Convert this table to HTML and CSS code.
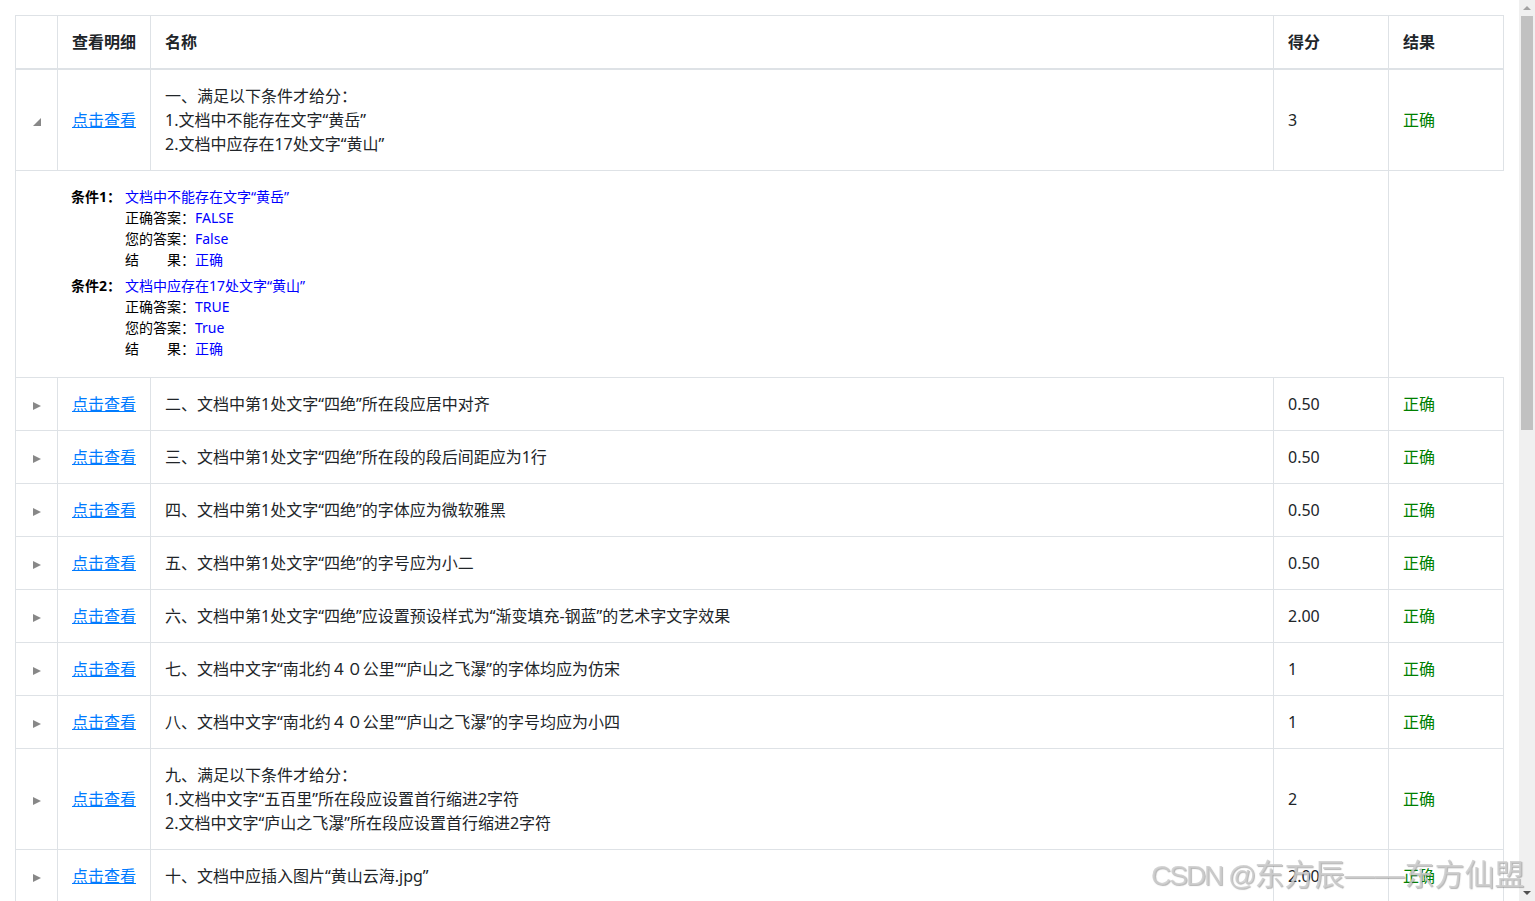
FILE: index.html
```html
<!DOCTYPE html>
<html lang="zh-CN">
<head>
<meta charset="utf-8">
<title>评分明细</title>
<link rel="stylesheet" href="styles.css">
</head>
<body>
<div class="page">
<table class="grid">
  <colgroup>
    <col class="c-arrow"><col class="c-view"><col class="c-name"><col class="c-score"><col class="c-result">
  </colgroup>
  <thead>
    <tr><th></th><th>查看明细</th><th>名称</th><th>得分</th><th>结果</th></tr>
  </thead>
  <tbody>
    <tr>
      <td class="arrow"><svg width="10" height="10" viewBox="0 0 10 10"><polygon points="9,1 9,9 1,9" fill="#888"/></svg></td>
      <td><a href="#">点击查看</a></td>
      <td>一、满足以下条件才给分：<br>1.文档中不能存在文字“黄岳”<br>2.文档中应存在17处文字“黄山”</td>
      <td>3</td>
      <td class="ok">正确</td>
    </tr>
    <tr class="detail">
      <td colspan="4">
        <div class="cond">
          <div class="line"><span class="clabel">条件1：</span><span class="val">文档中不能存在文字“黄岳”</span></div>
          <div class="line sub"><span class="flabel">正确答案：</span><span class="val">FALSE</span></div>
          <div class="line sub"><span class="flabel">您的答案：</span><span class="val">False</span></div>
          <div class="line sub"><span class="flabel spaced"><span>结</span><span>果：</span></span><span class="val">正确</span></div>
        </div>
        <div class="cond">
          <div class="line"><span class="clabel">条件2：</span><span class="val">文档中应存在17处文字“黄山”</span></div>
          <div class="line sub"><span class="flabel">正确答案：</span><span class="val">TRUE</span></div>
          <div class="line sub"><span class="flabel">您的答案：</span><span class="val">True</span></div>
          <div class="line sub"><span class="flabel spaced"><span>结</span><span>果：</span></span><span class="val">正确</span></div>
        </div>
      </td>
    </tr>
    <tr>
      <td class="arrow"><svg width="10" height="10" viewBox="0 0 10 10"><polygon points="1,1 9,5 1,9" fill="#888"/></svg></td>
      <td><a href="#">点击查看</a></td>
      <td>二、文档中第1处文字“四绝”所在段应居中对齐</td>
      <td>0.50</td>
      <td class="ok">正确</td>
    </tr>
    <tr>
      <td class="arrow"><svg width="10" height="10" viewBox="0 0 10 10"><polygon points="1,1 9,5 1,9" fill="#888"/></svg></td>
      <td><a href="#">点击查看</a></td>
      <td>三、文档中第1处文字“四绝”所在段的段后间距应为1行</td>
      <td>0.50</td>
      <td class="ok">正确</td>
    </tr>
    <tr>
      <td class="arrow"><svg width="10" height="10" viewBox="0 0 10 10"><polygon points="1,1 9,5 1,9" fill="#888"/></svg></td>
      <td><a href="#">点击查看</a></td>
      <td>四、文档中第1处文字“四绝”的字体应为微软雅黑</td>
      <td>0.50</td>
      <td class="ok">正确</td>
    </tr>
    <tr>
      <td class="arrow"><svg width="10" height="10" viewBox="0 0 10 10"><polygon points="1,1 9,5 1,9" fill="#888"/></svg></td>
      <td><a href="#">点击查看</a></td>
      <td>五、文档中第1处文字“四绝”的字号应为小二</td>
      <td>0.50</td>
      <td class="ok">正确</td>
    </tr>
    <tr>
      <td class="arrow"><svg width="10" height="10" viewBox="0 0 10 10"><polygon points="1,1 9,5 1,9" fill="#888"/></svg></td>
      <td><a href="#">点击查看</a></td>
      <td>六、文档中第1处文字“四绝”应设置预设样式为“渐变填充-钢蓝”的艺术字文字效果</td>
      <td>2.00</td>
      <td class="ok">正确</td>
    </tr>
    <tr>
      <td class="arrow"><svg width="10" height="10" viewBox="0 0 10 10"><polygon points="1,1 9,5 1,9" fill="#888"/></svg></td>
      <td><a href="#">点击查看</a></td>
      <td>七、文档中文字“南北约４０公里”“庐山之飞瀑”的字体均应为仿宋</td>
      <td>1</td>
      <td class="ok">正确</td>
    </tr>
    <tr>
      <td class="arrow"><svg width="10" height="10" viewBox="0 0 10 10"><polygon points="1,1 9,5 1,9" fill="#888"/></svg></td>
      <td><a href="#">点击查看</a></td>
      <td>八、文档中文字“南北约４０公里”“庐山之飞瀑”的字号均应为小四</td>
      <td>1</td>
      <td class="ok">正确</td>
    </tr>
    <tr>
      <td class="arrow"><svg width="10" height="10" viewBox="0 0 10 10"><polygon points="1,1 9,5 1,9" fill="#888"/></svg></td>
      <td><a href="#">点击查看</a></td>
      <td>九、满足以下条件才给分：<br>1.文档中文字“五百里”所在段应设置首行缩进2字符<br>2.文档中文字“庐山之飞瀑”所在段应设置首行缩进2字符</td>
      <td>2</td>
      <td class="ok">正确</td>
    </tr>
    <tr>
      <td class="arrow"><svg width="10" height="10" viewBox="0 0 10 10"><polygon points="1,1 9,5 1,9" fill="#888"/></svg></td>
      <td><a href="#">点击查看</a></td>
      <td>十、文档中应插入图片“黄山云海.jpg”</td>
      <td>2.00</td>
      <td class="ok">正确</td>
    </tr>
  </tbody>
</table>
</div>
<div class="scrollbar">
  <div class="sb-up"></div>
  <div class="sb-thumb"></div>
  <div class="sb-down"></div>
</div>
<div class="watermark"><span class="wm-latin">CSDN @</span>东方辰——东方仙盟</div>
</body>
</html>
```

FILE: styles.css
```css
html, body {
  margin: 0;
  padding: 0;
  overflow: hidden;
  height: 100%;
  background: #fff;
}
body {
  font-family: "Noto Sans", "Noto Sans CJK SC", sans-serif;
  font-size: 16px;
  color: #212529;
}
.page {
  padding: 15px 0 0 15px;
}
.grid {
  border-collapse: collapse;
  table-layout: fixed;
  width: 1489px;
}
.c-arrow { width: 42px; }
.c-view { width: 93px; }
.c-name { width: 1123px; }
.c-score { width: 115px; }
.c-result { width: 115px; }
.grid th,
.grid td {
  border: 1px solid #dee2e6;
  padding: 14px 14px;
  line-height: 24px;
  text-align: left;
  vertical-align: middle;
  white-space: nowrap;
}
.grid th {
  font-weight: bold;
  border-bottom: 2px solid #dee2e6;
  padding-top: 14px;
  padding-bottom: 14px;
}
.grid td.arrow {
  text-align: center;
  padding: 0;
}
.arrow svg {
  display: inline-block;
  vertical-align: middle;
}
.grid a {
  color: #007bff;
  text-decoration: underline;
}
.ok {
  color: #008000;
}
.detail td {
  padding: 15px 14px 18px 55px;
  font-size: 14px;
  line-height: 21px;
}
.cond + .cond {
  margin-top: 5px;
}
.line {
  display: flex;
}
.clabel {
  width: 54px;
  color: #000;
  font-weight: bold;
}
.sub {
  padding-left: 54px;
}
.flabel {
  width: 70px;
  color: #000;
}
.flabel.spaced {
  display: flex;
  justify-content: space-between;
  width: 70px;
}
.val {
  color: #0000ff;
}
.scrollbar {
  position: fixed;
  top: 0;
  right: 0;
  width: 16px;
  height: 901px;
  background: #f0f0f0;
}
.sb-thumb {
  position: absolute;
  left: 2px;
  top: 16px;
  width: 12px;
  height: 414px;
  background: #c1c1c1;
}
.sb-up {
  position: absolute;
  left: 4px;
  top: 6px;
  width: 0;
  height: 0;
  border-left: 4px solid transparent;
  border-right: 4px solid transparent;
  border-bottom: 4px solid #a3a3a3;
}
.sb-down {
  position: absolute;
  left: 4px;
  bottom: 6px;
  width: 0;
  height: 0;
  border-left: 4px solid transparent;
  border-right: 4px solid transparent;
  border-top: 4px solid #505050;
}
.watermark {
  position: fixed;
  left: 1151px;
  top: 855px;
  font-family: "Liberation Sans", "Noto Sans CJK SC", sans-serif;
  font-size: 30px;
  line-height: 40px;
  white-space: nowrap;
  color: rgba(205, 205, 205, 0.85);
  text-shadow: 1px 1px 1px rgba(90, 90, 90, 0.45);
}
.wm-latin {
  font-size: 28px;
  letter-spacing: -2px;
}
```
